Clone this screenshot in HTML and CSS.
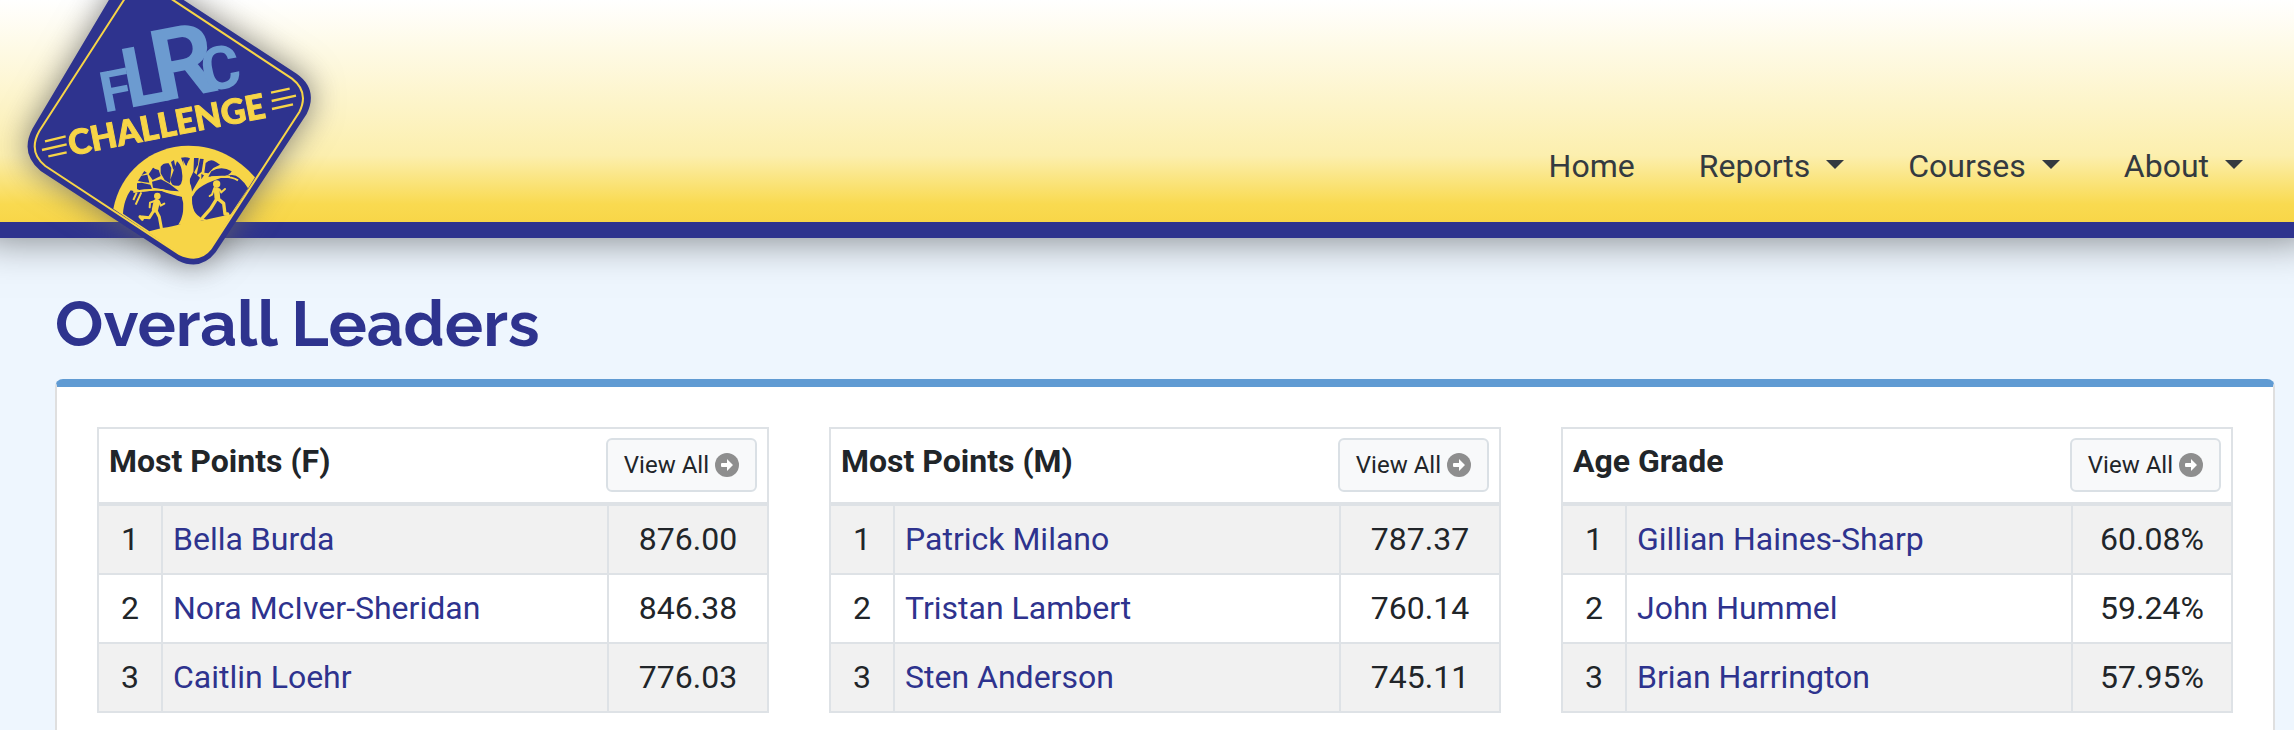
FILE: index.html
```
<!DOCTYPE html>
<html lang="en">
<head>
    <meta charset="UTF-8">
    <meta name="viewport" content="width=device-width, initial-scale=1.0">
    <title>FLRC Challenge</title>
    <link rel="stylesheet" href="styles.css">
</head>
<body>
    <header class="site-header">
        <a class="logo" href="#" aria-label="FLRC Challenge">
            <svg viewBox="0 -120 1080 990" aria-hidden="true">
                <path class="navy" d="M398 -120 L98 385 Q58 460 122 513 L535 782 Q602 814 647 757 L920 342 Q956 268 890 221 L450 -66 Z"/>
                <path class="outline" d="M422 -78 L118 393 Q83 455 136 498 L538 762 Q598 790 632 746 L898 336 Q928 276 876 236 L440 -52"/>
                <path class="gold" d="M340 626 C360 520 450 437 565 437 C650 437 715 475 765 532 L632 746 Q597 788 538 762 Z"/>
                <path class="navy" d="M369 641 C371 615 378 590 392 571 Q420 582 470 568 Q510 580 548 590 C554 620 550 650 541 673 Q520 680 486 684 L448 694 Z"/>
                <path class="navy" d="M576 585 C600 555 640 540 688 526 Q715 518 744 565 L692 643 L603 662 C580 650 572 610 576 585 Z"/>
                <path class="navy" d="M411 567 l0 -17 14 -2 26 6 5 12 -30 8 Z M414 543 l10 -16 18 -3 6 24 -14 -1 Z M425 525 l8 -12 8 6 Z M446 523 l12 -18 18 5 6 18 -24 12 Z M453 513 l6 -10 5 2 Z M456 545 l27 -7 26 14 28 22 -24 -2 -54 -9 Z"/>
                <path class="navy" d="M482 500 q8 -12 24 -10 l8 14 -4 46 -16 -10 -12 -20 Z M513 486 l9 -6 4 20 -6 10 Z M531 484 q10 7 14 25 q7 40 -8 48 q-24 4 -26 -18 q8 -22 20 -55 Z M543 473 q16 -4 27 2 l-10 22 -8 -1 Z"/>
                <path class="navy" d="M582 474 l14 0 -2 20 -14 28 Z M600 476 l11 1 -6 38 -16 14 Z M617 489 q15 -15 31 -3 l12 8 -20 10 -15 16 -12 -2 Z M634 514 q30 -18 61 0 q-6 15 -32 15 l-38 1 Z M566 545 l14 -30 20 18 -26 45 Z M604 522 l8 4 -8 12 Z"/>
                <g class="branches">
                    <path d="M550 588 Q512 580 486 570 Q440 568 400 576 M410 578 L400 600 M424 577 L407 614"/>
                    <path d="M575 588 Q590 555 635 532 Q690 525 714 541 M640 532 L690 530"/>
                </g>
                <path class="gold" d="M549 480 Q557 530 552 565 Q540 580 550 610 Q552 650 535 674 L620 659 Q576 650 576 600 Q578 565 570 550 Q568 510 566 480 L559 500 Z"/>
                <!-- left runner -->
                <circle class="gold" cx="472" cy="588" r="10"/>
                <path class="runner" d="M470 606 L465 628" stroke-width="19"/>
                <path class="runner" d="M464 603 L450 608 L449 622 M478 606 L482 617 L493 611" stroke-width="6"/>
                <path class="runner" d="M461 632 L448 653 L420 650 M420 650 L427 658 M468 631 L478 651 L484 683" stroke-width="9"/>
                <!-- right runner -->
                <circle class="gold" cx="650" cy="552" r="11"/>
                <path class="runner" d="M650 570 L652 594" stroke-width="17"/>
                <path class="runner" d="M643 564 L636 584 L629 588 M658 568 L664 577 L675 567" stroke-width="6"/>
                <path class="runner" d="M648 600 L632 626 L608 653 M656 598 L671 610 L675 642 L683 642" stroke-width="10"/>
                <g class="rays">
                    <path d="M135 424 L197 409 M126 450 L200 433 M145 469 L200 457"/>
                    <path d="M813 278 L869 266 M815 303 L888 287 M816 327 L879 313"/>
                </g>
                <g class="word">
                    <text transform="translate(312 338) rotate(-11)" font-size="170">F</text>
                    <text transform="translate(384 325) rotate(-11)" font-size="250">L</text>
                    <text transform="translate(474 307) rotate(-11)" font-size="300">R</text>
                    <text transform="translate(616 277) rotate(-11)" font-size="180">C</text>
                </g>
                <text class="word-challenge" transform="translate(212 467) rotate(-11)">CHALLENGE</text>
            </svg>
        </a>
        <nav class="main-nav">
            <a href="#">Home</a>
            <a class="dropdown" href="#">Reports</a>
            <a class="dropdown" href="#">Courses</a>
            <a class="dropdown" href="#">About</a>
        </nav>
    </header>

    <svg class="sprite" aria-hidden="true">
        <symbol id="arrow" viewBox="0 0 24 24">
            <circle cx="12" cy="12" r="12" fill="#8e8e8e"/>
            <path d="M7 10 h5 v-4 l6 6 -6 6 v-4 h-5 q-1 0 -1 -1 v-2 q0 -1 1 -1 Z" fill="#fff"/>
        </symbol>
    </svg>

    <main>
        <h1>Overall Leaders</h1>
        <div class="card">
            <table class="leaders">
                <thead>
                    <tr>
                        <th colspan="3">
                            <div class="table-title">
                                <span>Most Points (F)</span>
                                <button type="button" class="btn">View All <svg><use href="#arrow"/></svg></button>
                            </div>
                        </th>
                    </tr>
                </thead>
                <tbody>
                    <tr><td class="rank">1</td><td><a href="#">Bella Burda</a></td><td class="score">876.00</td></tr>
                    <tr><td class="rank">2</td><td><a href="#">Nora McIver-Sheridan</a></td><td class="score">846.38</td></tr>
                    <tr><td class="rank">3</td><td><a href="#">Caitlin Loehr</a></td><td class="score">776.03</td></tr>
                </tbody>
            </table>
            <table class="leaders">
                <thead>
                    <tr>
                        <th colspan="3">
                            <div class="table-title">
                                <span>Most Points (M)</span>
                                <button type="button" class="btn">View All <svg><use href="#arrow"/></svg></button>
                            </div>
                        </th>
                    </tr>
                </thead>
                <tbody>
                    <tr><td class="rank">1</td><td><a href="#">Patrick Milano</a></td><td class="score">787.37</td></tr>
                    <tr><td class="rank">2</td><td><a href="#">Tristan Lambert</a></td><td class="score">760.14</td></tr>
                    <tr><td class="rank">3</td><td><a href="#">Sten Anderson</a></td><td class="score">745.11</td></tr>
                </tbody>
            </table>
            <table class="leaders">
                <thead>
                    <tr>
                        <th colspan="3">
                            <div class="table-title">
                                <span>Age Grade</span>
                                <button type="button" class="btn">View All <svg><use href="#arrow"/></svg></button>
                            </div>
                        </th>
                    </tr>
                </thead>
                <tbody>
                    <tr><td class="rank">1</td><td><a href="#">Gillian Haines-Sharp</a></td><td class="score">60.08%</td></tr>
                    <tr><td class="rank">2</td><td><a href="#">John Hummel</a></td><td class="score">59.24%</td></tr>
                    <tr><td class="rank">3</td><td><a href="#">Brian Harrington</a></td><td class="score">57.95%</td></tr>
                </tbody>
            </table>
        </div>
    </main>
</body>
</html>
```
FILE: styles.css
```
* {
    box-sizing: border-box;
}
body {
    margin: 0;
    background-color: #eef6fe;
    color: #212529;
    font-family: Roboto, sans-serif;
    font-size: 32px;
    line-height: 48px;
}
a {
    color: #2e338e;
    text-decoration: none;
}
.site-header {
    position: relative;
    display: flex;
    justify-content: flex-end;
    padding: 142px 19px 32px;
    background: linear-gradient(#fff 0%, #fcefae 70%, #f9da50 92%, #f8d648 100%);
    border-bottom: 16px solid #2e338e;
    box-shadow: 0 -20px 40px 20px rgba(0, 0, 0, 0.5);
}
.logo {
    position: absolute;
    top: -40px;
    left: 0;
}
.logo svg {
    display: block;
    width: 360px;
    height: 330px;
    overflow: visible;
    filter: drop-shadow(0 0 16px rgba(100, 100, 100, 0.8));
}
.navy {
    fill: #2e338e;
}
.gold {
    fill: #f7d547;
}
.outline, .branches, .rays, .runner {
    fill: none;
    stroke: #f7d547;
}
.outline, .branches {
    stroke-width: 6;
}
.rays {
    stroke-width: 7;
}
.runner {
    stroke-linecap: round;
    stroke-linejoin: round;
}
.word {
    fill: #6c9bd0;
    font-family: Roboto, sans-serif;
    font-weight: bold;
}
.word-challenge {
    fill: #f7d547;
    stroke: #f7d547;
    stroke-width: 3;
    font-family: Lato, sans-serif;
    font-size: 103px;
    font-weight: 900;
}
.main-nav {
    display: flex;
}
.main-nav a {
    padding: 0 32px;
    color: #343a40;
}
.dropdown::after {
    content: "";
    display: inline-block;
    margin-left: 16px;
    vertical-align: 8px;
    border-top: 9px solid;
    border-left: 9px solid transparent;
    border-right: 9px solid transparent;
}
.sprite {
    display: none;
}
main {
    padding: 48px 19px 0 55px;
}
h1 {
    margin: 0 0 18px;
    color: #2e338e;
    font-family: Raleway, Lato, sans-serif;
    font-size: 64px;
    font-weight: 700;
    line-height: 75px;
}
.card {
    display: grid;
    grid-template-columns: repeat(3, 1fr);
    gap: 60px;
    padding: 40px 40px 17px;
    background: #fff;
    border: 2px solid #dfdfdf;
    border-top: 8px solid #609bd3;
    border-bottom: 0;
    border-radius: 8px 8px 0 0;
}
.leaders {
    width: 100%;
    border-collapse: collapse;
}
.leaders th, .leaders td {
    padding: 10px;
    border: 2px solid #dee2e6;
    line-height: 47px;
    text-align: left;
}
.leaders th {
    padding-top: 9px;
    border-bottom-width: 4px;
}
.leaders tbody tr:nth-child(odd) {
    background: #f1f1f1;
}
.leaders .rank {
    width: 64px;
    text-align: center;
}
.leaders .score {
    width: 160px;
    text-align: center;
}
.table-title {
    display: flex;
    justify-content: space-between;
}
.btn {
    display: flex;
    align-items: center;
    gap: 6px;
    padding: 8px 16px;
    background: #f8f9fa;
    border: 2px solid #dae0e5;
    border-radius: 6px;
    color: #212529;
    font-family: inherit;
    font-size: 24px;
    line-height: 34px;
}
.btn svg {
    width: 24px;
    height: 24px;
}
```
